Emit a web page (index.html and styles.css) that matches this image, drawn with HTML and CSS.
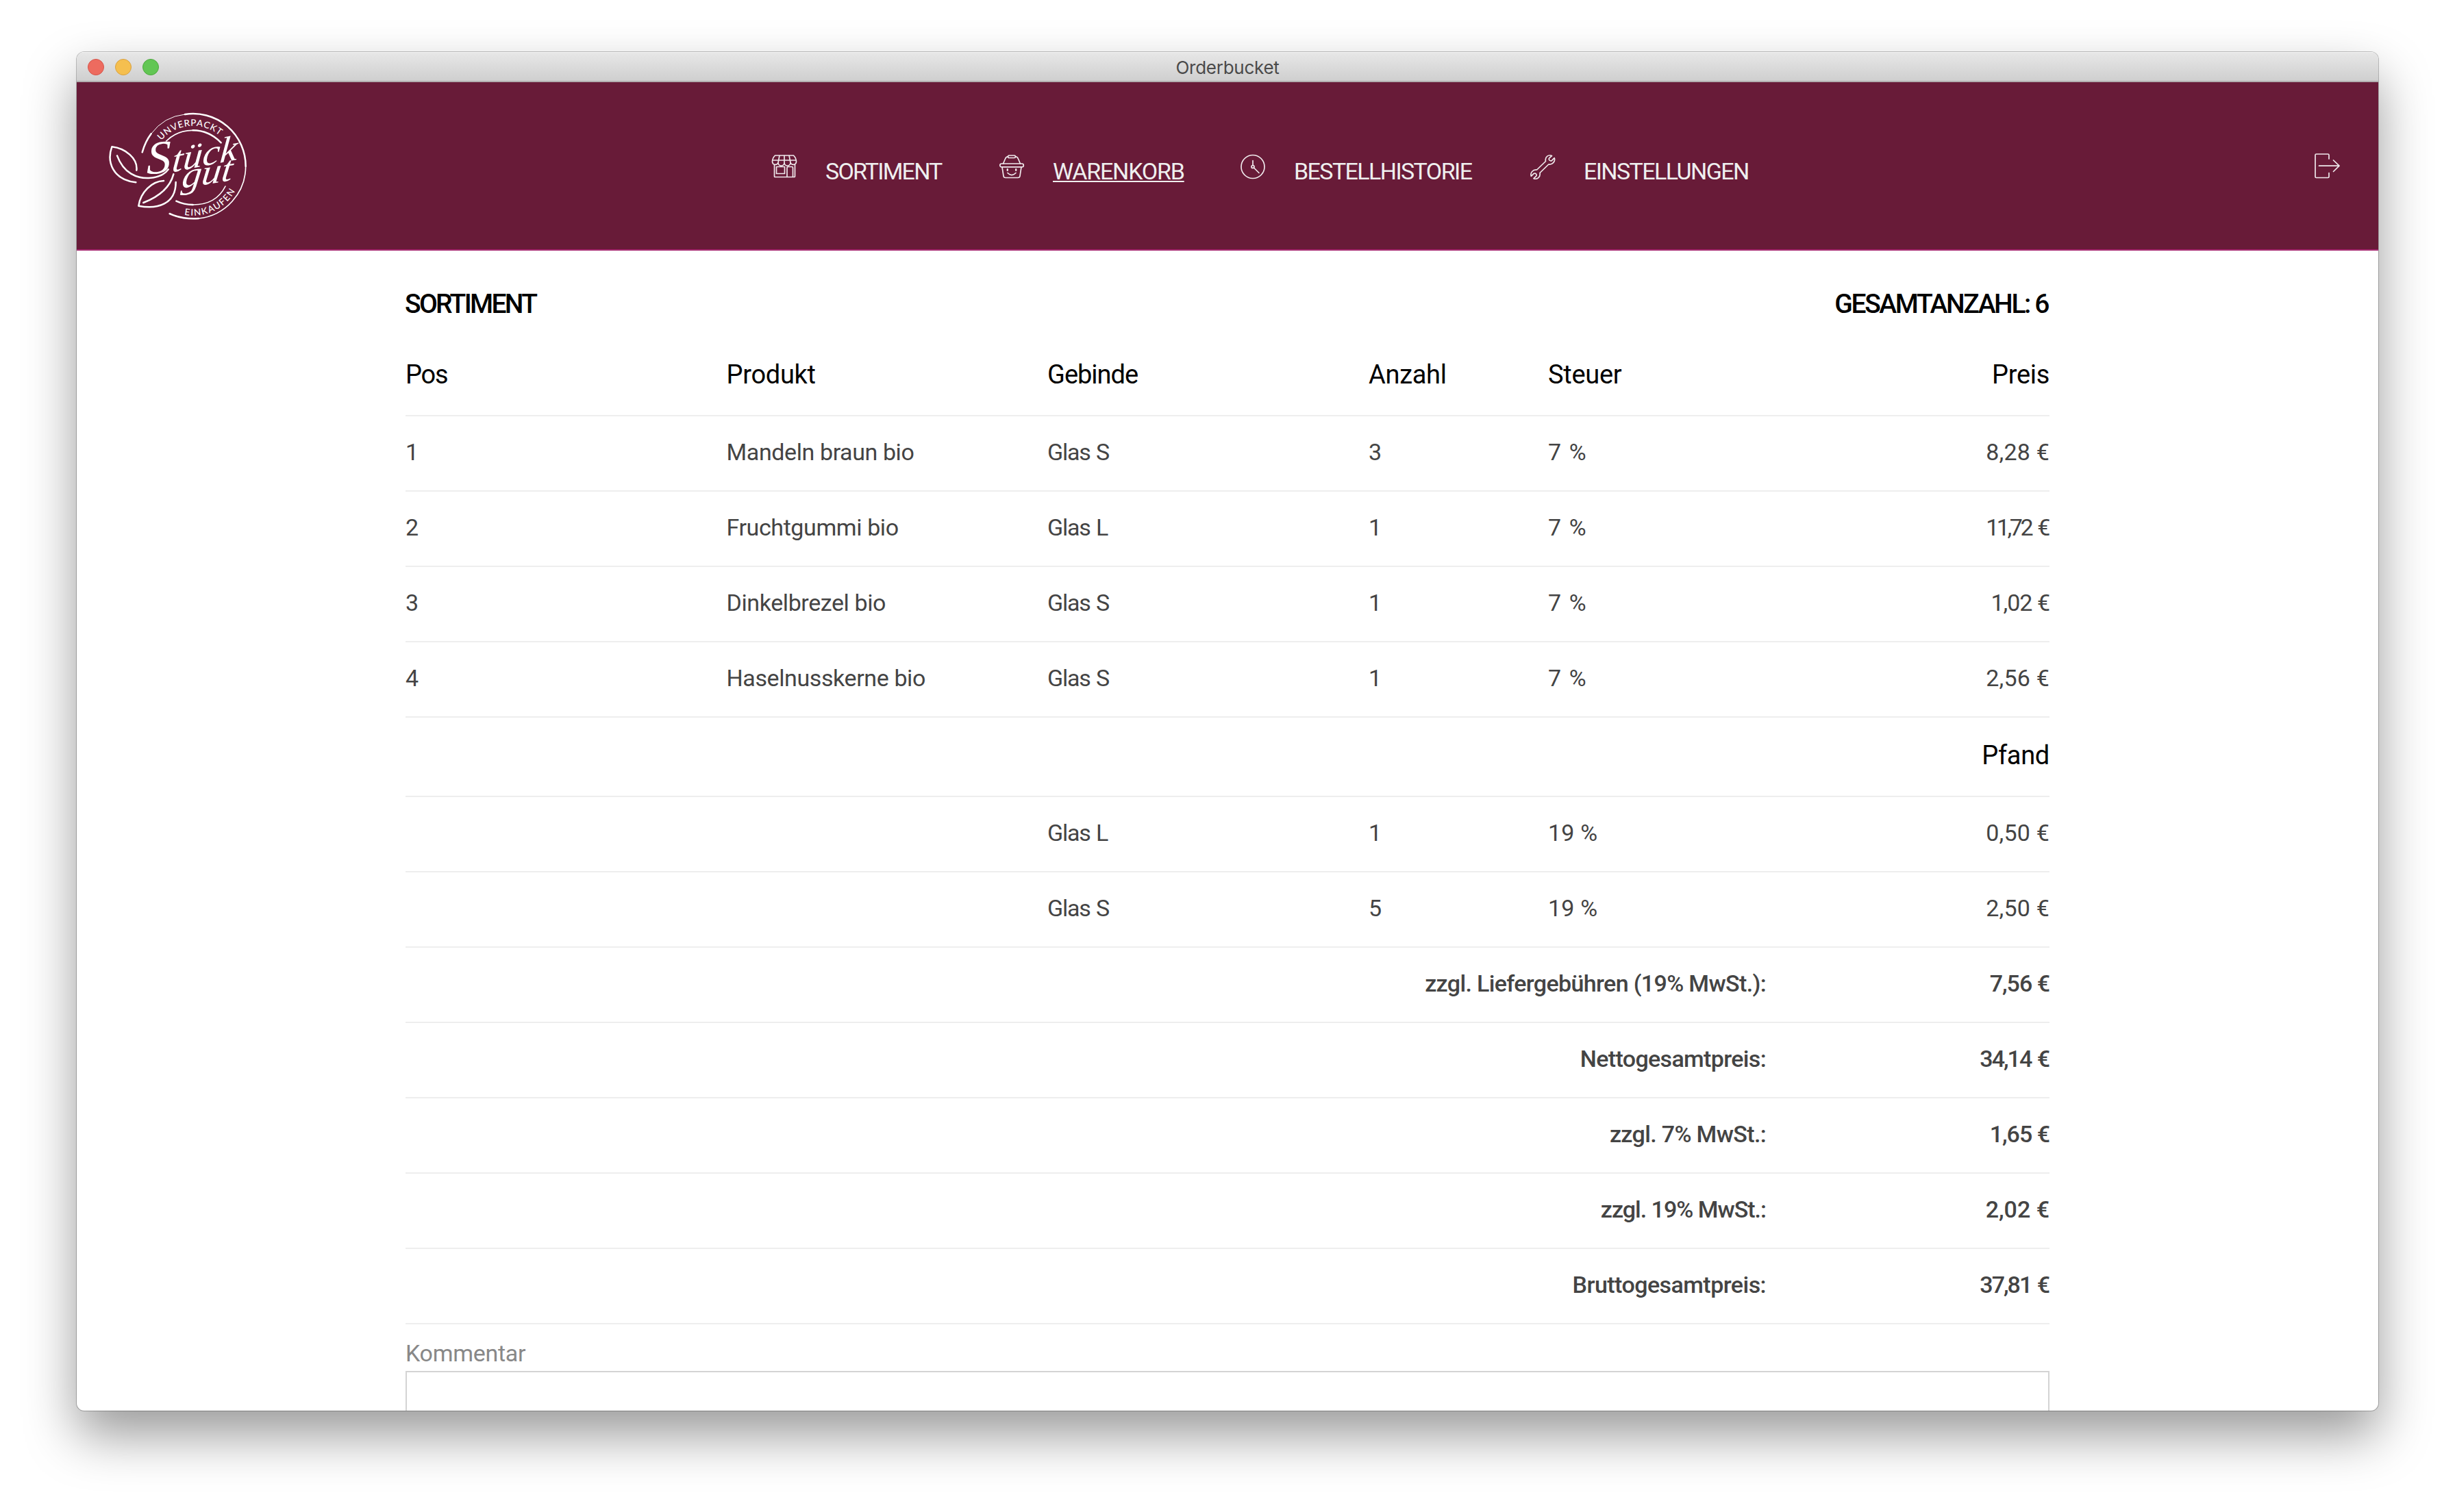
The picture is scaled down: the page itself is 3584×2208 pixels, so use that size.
FILE: index.html
```html
<!DOCTYPE html>
<html lang="de">
<head>
<meta charset="utf-8">
<title>Orderbucket</title>
<link rel="stylesheet" href="styles.css">
</head>
<body>
<div class="window">
  <div class="titlebar">
    <div class="lights"><i class="light red"></i><i class="light yellow"></i><i class="light green"></i></div>
    <div class="title">Orderbucket</div>
  </div>
  <header class="header">
    <svg class="logo" viewBox="210 318 600 462" aria-label="Stückgut">
      <defs>
        <path id="arc-top" d="M436 436A182 182 0 0 1 692 414"/>
        <path id="arc-bottom" d="M537 761A210 210 0 0 0 765 647"/>
      </defs>
      <g class="logo-line">
        <path class="bold" d="M353 487Q366 441 392 406"/>
        <path class="thin" d="M392 406Q448 330 540 321"/>
        <path class="bold" d="M540 321A230 230 0 0 1 806 548"/>
        <path d="M806 548A230 230 0 0 1 600 777"/>
        <path class="bold" d="M600 777Q530 782 473 756"/>
        <path d="M458 438A164 164 0 0 1 575 391"/>
        <path class="bold" d="M575 391Q645 391 698 445"/>
        <path class="bold" d="M502 701Q536 717 575 717"/>
        <path d="M575 717C640 717 690 690 717 636"/>
        <path class="bold" d="M325 619C225 608 196 530 220 463C280 470 334 514 328 566"/>
        <path class="bold" d="M243 502C272 580 330 602 382 600C424 597 452 584 467 562"/>
        <path class="bold" d="M447 612C395 614 345 662 337 722C420 738 500 715 500 618"/>
        <path class="bold" d="M358 708C430 680 475 640 490 583"/>
      </g>
      <text class="ring"><textPath href="#arc-top" textLength="284">UNVERPACKT</textPath></text>
      <text class="ring"><textPath href="#arc-bottom" textLength="262">EINKAUFEN</textPath></text>
      <text class="script cap" transform="translate(372 584) rotate(-6) skewX(-6)" textLength="108" lengthAdjust="spacingAndGlyphs">S</text>
      <text class="script" transform="translate(480 575) rotate(-11) skewX(-16)" textLength="292" lengthAdjust="spacingAndGlyphs">tück</text>
      <text class="script" transform="translate(522 645) rotate(-9) skewX(-16)" textLength="224" lengthAdjust="spacingAndGlyphs">gut</text>
    </svg>
    <nav class="nav">
      <a class="item sortiment">
        <svg class="icon" viewBox="0 0 36 36"><path d="M4.5 1H31.5Q35.5 5 35.5 10.5A4.4 4.4 0 0 1 27 11.5A4.5 4.5 0 0 1 18 11.5A4.5 4.5 0 0 1 9 11.5A4.4 4.4 0 0 1 .5 10.5Q.5 5 4.5 1ZM1 8H35M11 1L9 11.5M18 1V11.5M25 1L27 11.5M3.500 14.5V31.5Q3.500 32.5 4.5 32.5H32.5Q33.5 32.5 33.5 31.5V14.5M6.5 17.5H18.5V27.5H6.5ZM22 32.5V19Q22 17.5 23.5 17.5H29Q30.5 17.5 30.5 19V32.5"/></svg>
        <span class="label">SORTIMENT</span>
      </a>
      <a class="item warenkorb">
        <svg class="icon" viewBox="0 0 36 36"><rect x="12.5" y="1" width="11" height="3.5" rx="1.7"/><path d="M12.5 2.5Q9.5 3 8.5 6L5.5 13M23.5 2.5Q26.5 3 27.5 6L30.5 13M4 18L6 31Q6.3 33.5 9 33.5H27Q29.7 33.5 30 31L32 18M12 26.5Q18 32.5 24 26.5"/><rect x=".8" y="13" width="34.5" height="4.8" rx="2.4"/><path class="dot" d="M11.8 21.2V22.8M24.2 21.2V22.8"/></svg>
        <span class="label">WARENKORB</span>
      </a>
      <a class="item historie">
        <svg class="icon" viewBox="0 0 36 36"><circle cx="18" cy="17.5" r="17"/><circle cx="18" cy="17.5" r="2"/><path d="M18 8.5V15.5M19.5 19L27 26.5"/></svg>
        <span class="label">BESTELLHISTORIE</span>
      </a>
      <a class="item einstellungen">
        <svg class="icon" viewBox="0 0 36 36"><path d="M31.5 1.5C27 -.8 21 3 22.5 9.5L9.5 22C4 21.500 -.5 26 1.3 31.3L5 27.6Q7 26.5 8.5 28Q10 29.8 8.5 31.3L5 34.7C10 36.7 15.2 32.5 14 26.5L26.8 14C32 14.8 37 10 35.2 4.7L31.5 8.4Q29.5 9.5 28 8Q26.5 6.2 28 4.7Z"/></svg>
        <span class="label">EINSTELLUNGEN</span>
      </a>
    </nav>
    <svg class="icon logout" viewBox="0 0 38 37"><path d="M21 8V2.5Q21 1 19.5 1H2.5Q1 1 1 2.5V34Q1 35.5 2.5 35.5H19.5Q21 35.5 21 34V28.5M6.5 18.2H36M27.5 10L36 18.2L27.5 26.5"/></svg>
  </header>
  <main class="content">
    <div class="headline"><span class="caps-a">SORTIMENT</span><span class="caps-b">GESAMTANZAHL: 6</span></div>
    <table class="order">
      <colgroup><col class="c-pos"><col class="c-product"><col class="c-pack"><col class="c-count"><col class="c-tax"><col class="c-price"></colgroup>
      <thead>
        <tr><th class="k12">Pos</th><th>Produkt</th><th class="k10">Gebinde</th><th>Anzahl</th><th>Steuer</th><th class="price">Preis</th></tr>
      </thead>
      <tbody>
        <tr><td>1</td><td>Mandeln braun bio</td><td class="k12">Glas S</td><td>3</td><td class="percent">7 %</td><td class="price">8,28 €</td></tr>
        <tr><td>2</td><td>Fruchtgummi bio</td><td class="k12">Glas L</td><td>1</td><td class="percent">7 %</td><td class="price k30">11,72 €</td></tr>
        <tr><td>3</td><td>Dinkelbrezel bio</td><td class="k12">Glas S</td><td>1</td><td class="percent">7 %</td><td class="price k10">1,02 €</td></tr>
        <tr><td>4</td><td>Haselnusskerne bio</td><td class="k12">Glas S</td><td>1</td><td class="percent">7 %</td><td class="price">2,56 €</td></tr>
        <tr class="deposit"><th colspan="6" class="price">Pfand</th></tr>
        <tr><td></td><td></td><td class="k12">Glas L</td><td>1</td><td class="k0">19 %</td><td class="price">0,50 €</td></tr>
        <tr><td></td><td></td><td class="k12">Glas S</td><td>5</td><td class="k0">19 %</td><td class="price">2,50 €</td></tr>
      </tbody>
      <tbody class="sum">
        <tr><td colspan="5" class="right">zzgl. Liefergebühren (19% MwSt.):</td><td class="price k10">7,56 €</td></tr>
        <tr><td colspan="5" class="right">Nettogesamtpreis:</td><td class="price k18">34,14 €</td></tr>
        <tr><td colspan="5" class="right">zzgl. 7% MwSt.:</td><td class="price k10">1,65 €</td></tr>
        <tr><td colspan="5" class="right k10">zzgl. 19% MwSt.:</td><td class="price">2,02 €</td></tr>
        <tr><td colspan="5" class="right k05">Bruttogesamtpreis:</td><td class="price k18">37,81 €</td></tr>
      </tbody>
    </table>
    <label class="comment-label" for="comment">Kommentar</label>
    <textarea class="comment" id="comment"></textarea>
  </main>
</div>
</body>
</html>
```
FILE: styles.css
```css
* { box-sizing: border-box; }
html, body { height: 100%; }
body {
  margin: 0;
  padding: 76px 112px 0;
  overflow: hidden;
  background: #fff;
  font-family: Roboto, "Liberation Sans", sans-serif;
}
.window {
  height: 1984px;
  border-radius: 11px;
  overflow: hidden;
  background: #fff;
  box-shadow: 0 0 0 1px rgba(0, 0, 0, .24), 0 36px 76px rgba(0, 0, 0, .4);
}
.titlebar {
  display: grid;
  grid-template-columns: 1fr auto 1fr;
  align-items: center;
  height: 44px;
  padding-left: 16px;
  padding-right: 16px;
  border-top: 1px solid #f5f5f5;
  border-bottom: 2px solid #b3afb0;
  background: linear-gradient(#e7e7e7, #cfcfcf);
}
.lights { display: flex; gap: 16px; }
.light { width: 24px; height: 24px; border-radius: 50%; border: 1px solid; }
.red { background: #ed6b5f; border-color: #d5544a; }
.yellow { background: #f5bf4f; border-color: #d8a040; }
.green { background: #62c654; border-color: #4ea73f; }
.title {
  padding-top: 2px;
  font: 400 26px Inter, "Liberation Sans", sans-serif;
  letter-spacing: -.27px;
  color: #4a4a4a;
}
.header {
  display: flex;
  align-items: center;
  height: 246px;
  padding: 0 55px 0 48px;
  border-bottom: 2px solid #a5286f;
  background: #681b38;
}
.logo { width: 200px; height: 154px; margin-top: 2px; overflow: visible; }
.logo-line { fill: none; stroke: #fff; stroke-width: 5; stroke-linecap: round; stroke-linejoin: round; }
.logo-line .bold { stroke-width: 7.5; }
.logo-line .thin { stroke-width: 3; }
.ring { font: 500 40px Lato, sans-serif; fill: #fff; }
.script { font: italic 400 154px "Liberation Serif", serif; fill: #fff; }
.script.cap { font-size: 204px; }
.nav { display: flex; gap: 83px; margin-left: 767px; }
.item { display: flex; align-items: center; color: #efefef; }
.sortiment { width: 249px; }
.warenkorb { width: 269px; }
.historie { width: 340px; }
.icon {
  flex: none;
  width: 36px;
  height: 36px;
  margin-top: 3px;
  fill: none;
  stroke: #efe8eb;
  stroke-width: 1.7;
  stroke-linecap: round;
  stroke-linejoin: round;
  overflow: visible;
}
.icon .dot { stroke-width: 2.4; }
.label {
  margin-left: 42px;
  padding-top: 15px;
  font-size: 34px;
  line-height: 40px;
  letter-spacing: -1.6px;
  white-space: nowrap;
}
.sortiment .label { letter-spacing: -1.8px; }
.warenkorb .label {
  letter-spacing: -1.2px;
  text-decoration: underline 2px;
  text-underline-offset: 2px;
  text-decoration-skip-ink: none;
}
.logout { width: 38px; height: 37px; margin: 0 0 0 auto; }
.content { width: 2400px; margin-left: 480px; }
.headline {
  display: flex;
  justify-content: space-between;
  align-items: center;
  height: 120px;
  padding-top: 35px;
  font-size: 39px;
  font-weight: 500;
  color: #000;
}
.caps-a { margin-left: -1px; letter-spacing: -2.7px; }
.caps-b { letter-spacing: -2.4px; padding-right: 2px; }
.order { width: 2400px; table-layout: fixed; border-collapse: separate; border-spacing: 0; }
.c-pos, .c-product { width: 468.5px; }
.c-pack { width: 469px; }
.c-count { width: 262px; }
.c-tax { width: 318px; }
.c-price { width: 414px; }
th, td {
  height: 110px;
  padding: 0 0 4px;
  border-bottom: 2px solid #eee;
  text-align: left;
  vertical-align: middle;
  white-space: nowrap;
}
th { height: 122px; padding: 2px 0 0; font-size: 38px; font-weight: 400; letter-spacing: -.3px; color: #000; }
td { font-size: 34px; letter-spacing: -.4px; color: #444; }
.deposit th { height: 116px; padding: 0 0 4px; }
.sum td { font-weight: 500; letter-spacing: -.65px; }
.price, .right { text-align: right; }
td.price, .k0 { letter-spacing: .2px; }
.sum td.price { letter-spacing: 0; }
.percent { word-spacing: 2px; letter-spacing: .6px; }
.order tr .k05.k05 { letter-spacing: -.55px; }
.order tr .k10.k10 { letter-spacing: -1px; }
.order tr .k12.k12 { letter-spacing: -1.2px; word-spacing: 1px; }
.order tr .k18.k18 { letter-spacing: -2px; word-spacing: 2px; padding-right: 1px; }
.order tr .k30.k30 { letter-spacing: -3.4px; word-spacing: 4px; padding-right: 2px; }
.comment-label {
  display: block;
  height: 68px;
  padding-top: 22px;
  font-size: 34px;
  line-height: 40px;
  letter-spacing: -.3px;
  color: #888;
}
.comment {
  display: block;
  width: 2400px;
  height: 200px;
  border: 2px solid #d4d4d4;
  border-radius: 0;
  outline: 0;
  resize: none;
  background: #fff;
}
```
